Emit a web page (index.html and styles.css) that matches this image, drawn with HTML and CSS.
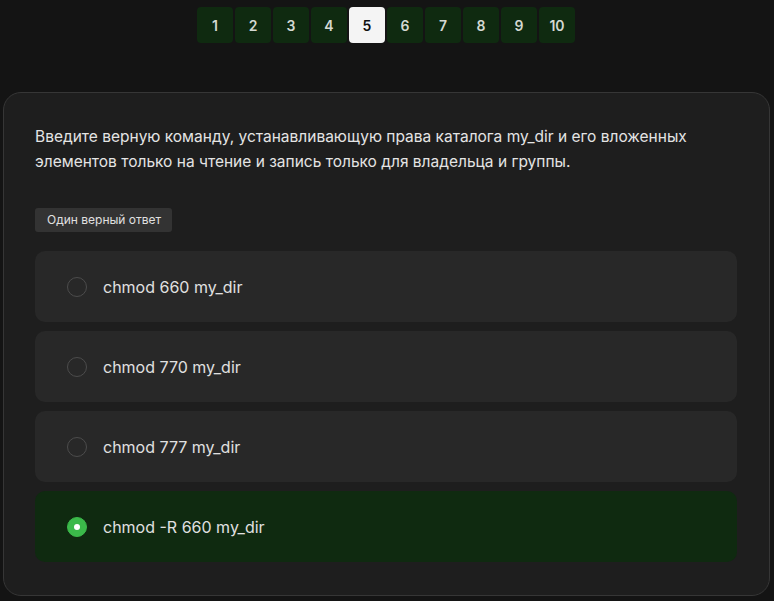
FILE: index.html
```html
<!DOCTYPE html>
<html lang="ru">
<head>
<meta charset="utf-8">
<title>Тест</title>
<link rel="stylesheet" href="styles.css">
</head>
<body>
<nav class="pager">
  <button class="page">1</button>
  <button class="page">2</button>
  <button class="page">3</button>
  <button class="page">4</button>
  <button class="page active">5</button>
  <button class="page">6</button>
  <button class="page">7</button>
  <button class="page">8</button>
  <button class="page">9</button>
  <button class="page">10</button>
</nav>
<section class="card">
  <p class="question">Введите верную команду, устанавливающую права каталога my_dir и его вложенных элементов только на чтение и запись только для владельца и группы.</p>
  <span class="badge">Один верный ответ</span>
  <ul class="options">
    <li class="option"><span class="radio"></span><span class="label">chmod 660 my_dir</span></li>
    <li class="option"><span class="radio"></span><span class="label">chmod 770 my_dir</span></li>
    <li class="option"><span class="radio"></span><span class="label">chmod 777 my_dir</span></li>
    <li class="option selected"><span class="radio"></span><span class="label">chmod -R 660 my_dir</span></li>
  </ul>
</section>
</body>
</html>
```
FILE: styles.css
```css
* { box-sizing: border-box; }
html, body { margin: 0; padding: 0; }
body {
  background: #141414;
  font-family: Inter, "Noto Sans", sans-serif;
  color: #e2e2e2;
  padding: 7px 4px 0 3px;
}
.pager {
  display: flex;
  justify-content: center;
  gap: 2px;
  margin-right: 1px;
}
.page {
  width: 36px;
  height: 36px;
  border: 0;
  border-radius: 4px;
  background: #0f2a10;
  color: #d4d8d2;
  font-family: Inter, sans-serif;
  font-size: 14px;
  font-weight: 600;
  padding: 0;
}
.page.active {
  background: #f4f4f4;
  color: #111;
}
.card {
  margin-top: 49px;
  background: #1e1e1e;
  border: 1px solid #363636;
  border-radius: 18px;
  padding: 31px 32px 33px 31px;
}
.question {
  margin: 0;
  font-size: 15.5px;
  line-height: 25px;
  color: #e4e4e4;
}
.badge {
  display: inline-block;
  margin-top: 34px;
  height: 24px;
  line-height: 24px;
  padding: 0 11px 0 12px;
  background: #333333;
  border-radius: 3px;
  font-size: 12px;
  color: #e0e0e0;
}
.options {
  list-style: none;
  margin: 19px 0 0;
  padding: 0;
  display: flex;
  flex-direction: column;
  gap: 9px;
}
.option {
  height: 71px;
  background: #282828;
  border-radius: 10px;
  display: flex;
  align-items: center;
  padding-left: 32px;
  gap: 16px;
}
.option.selected { background: #0f2a10; }
.radio {
  width: 20px;
  height: 20px;
  border-radius: 50%;
  border: 1.5px solid #4c4c4c;
  flex: none;
  display: flex;
  align-items: center;
  justify-content: center;
}
.option.selected .radio {
  background: #3bb94a;
  border-color: #3bb94a;
}
.option.selected .radio::after {
  content: "";
  width: 6px;
  height: 6px;
  border-radius: 50%;
  background: #fff;
}
.label {
  font-size: 16px;
  color: #e0e0e0;
}
```
